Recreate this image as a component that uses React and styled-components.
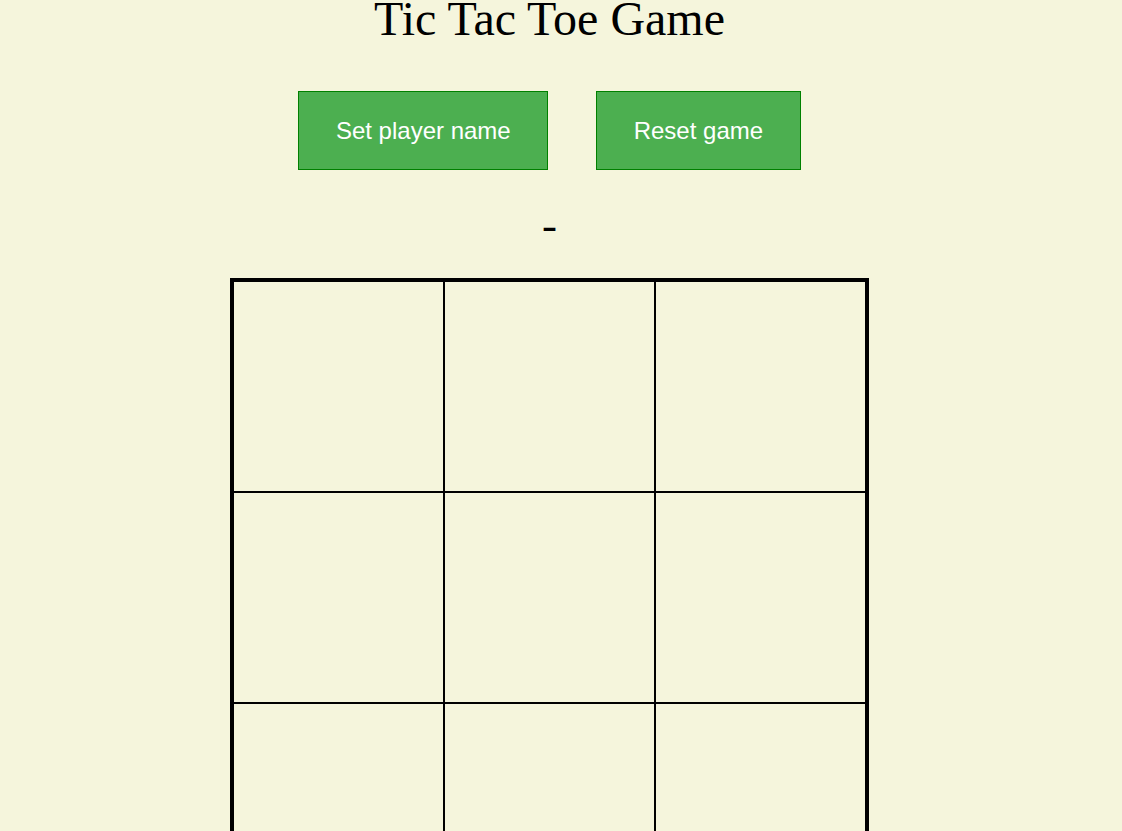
import React from 'react';
import styled, { createGlobalStyle } from 'styled-components';

const GlobalStyle = createGlobalStyle`
  html, body {
    margin: 0;
    padding: 0;
    background: #f5f5dc;
    overflow: hidden;
  }
  body {
    font-family: "Liberation Serif", "Times New Roman", serif;
  }
`;

const Page = styled.div`
  width: calc(100% - 23px);
  display: flex;
  flex-direction: column;
  align-items: center;
`;

const Title = styled.h1`
  margin: 0;
  font-size: 48px;
  font-weight: 400;
  line-height: 38px;
  color: #000;
`;

const Controls = styled.div`
  margin-top: 53px;
  display: flex;
  gap: 48px;
`;

const Button = styled.button`
  box-sizing: border-box;
  padding: 25px 36.5px;
  border: 1px solid #008000;
  background: #4caf50;
  color: #fff;
  font-family: "Liberation Sans", Arial, sans-serif;
  font-size: 24px;
  line-height: 27px;
  cursor: pointer;
`;

const Status = styled.div`
  margin-top: 30px;
  font-size: 45px;
  line-height: 50px;
  color: #000;
`;

const Board = styled.div`
  margin-top: 28px;
  display: grid;
  grid-template-columns: repeat(3, 211px);
  grid-auto-rows: 211px;
  border: 3px solid #000;
`;

const Cell = styled.div`
  box-sizing: border-box;
  border: 1px solid #000;
`;

const cells = Array.from({ length: 9 }, (_, i) => i);

export default function App() {
  return (
    <>
      <GlobalStyle />
      <Page>
        <Title>Tic Tac Toe Game</Title>
        <Controls>
          <Button>Set player name</Button>
          <Button>Reset game</Button>
        </Controls>
        <Status>-</Status>
        <Board>
          {cells.map((i) => (
            <Cell key={i} />
          ))}
        </Board>
      </Page>
    </>
  );
}
